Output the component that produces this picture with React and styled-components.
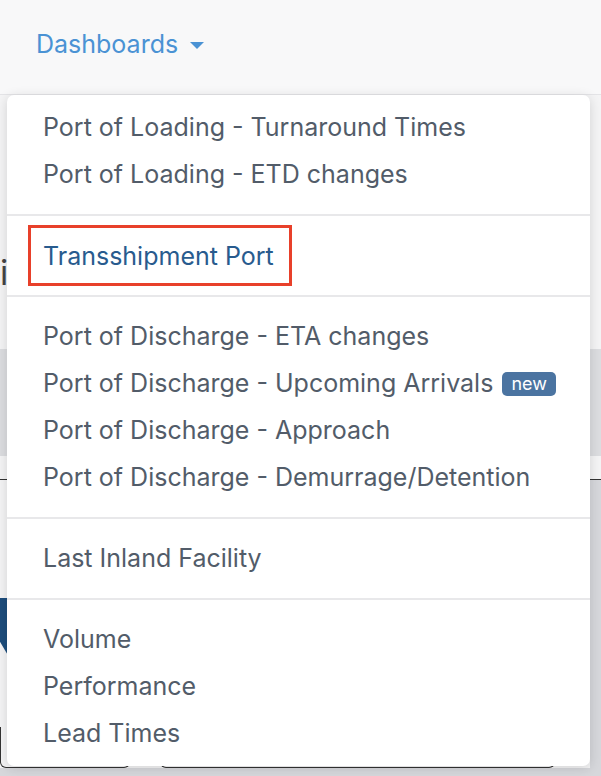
import React from "react";
import styled, { createGlobalStyle } from "styled-components";

const GlobalStyle = createGlobalStyle`
  html, body {
    margin: 0;
    padding: 0;
    background: #dcdde0;
    font-family: Inter, "Noto Sans", sans-serif;
  }
`;

const Page = styled.div`
  width: 601px;
  height: 776px;
  overflow: hidden;
  display: flex;
  flex-direction: column;
  background: #f4f4f5;
`;

const NavBar = styled.div`
  height: 95px;
  flex: none;
  background: #f8f8f9;
  border-bottom: 1px solid #e4e4e7;
  display: flex;
  align-items: center;
  padding-left: 36px;
  box-sizing: border-box;
  padding-bottom: 6px;
`;

const NavItem = styled.div`
  position: relative;
`;

const Toggle = styled.button`
  border: 0;
  background: none;
  padding: 0;
  font: inherit;
  font-size: 25px;
  line-height: 30px;
  color: #4a92d4;
  display: flex;
  align-items: center;
  gap: 12px;
  cursor: pointer;
`;

const Caret = styled.span`
  width: 0;
  height: 0;
  border-left: 7px solid transparent;
  border-right: 7px solid transparent;
  border-top: 7px solid #4a92d4;
  margin-top: 2px;
`;

const Menu = styled.div`
  position: absolute;
  left: -29px;
  top: 66px;
  width: 583px;
  box-sizing: border-box;
  background: #fff;
  border-radius: 7px;
  box-shadow: 0 2px 12px rgba(0, 0, 0, 0.14);
  padding: 9px 0;
  z-index: 10;
`;

const Item = styled.div`
  font-size: 25px;
  line-height: 47px;
  height: 47px;
  padding-left: 36px;
  color: ${(p) => (p.$active ? "#285b8e" : "#525c69")};
  display: flex;
  align-items: center;
  white-space: nowrap;
`;

const Highlight = styled.span`
  position: relative;
  line-height: 30px;

  &::after {
    content: "";
    position: absolute;
    left: -15px;
    right: -18px;
    top: -16px;
    bottom: -15px;
    border: 3px solid #e8402a;
  }
`;

const Divider = styled.div`
  height: 2px;
  background: #e8e8ea;
  margin: 16px 0;
`;

const Badge = styled.span`
  margin-left: 9px;
  height: 24px;
  line-height: 23px;
  padding: 0 9px;
  border-radius: 5px;
  background: #4b74a1;
  color: #fff;
  font-size: 18px;
`;

const Content = styled.div`
  flex: 1;
  display: flex;
  flex-direction: column;
`;

const Heading = styled.h1`
  margin: 0;
  height: 254px;
  display: flex;
  align-items: center;
  padding-top: 100px;
  box-sizing: border-box;
  font-size: 34px;
  font-weight: 400;
  color: #444;
`;

const Band = styled.div`
  height: 107px;
  background: #dcdde0;
`;

const Gap = styled.div`
  height: 23px;
  border-bottom: 1px solid #333;
`;

const Lower = styled.div`
  flex: 1;
  display: grid;
  grid-template-columns: 590px 1fr;
  background: #d6d7db;
`;

const Card = styled.div`
  background: #f4f4f5;
  display: flex;
  flex-direction: column;
  justify-content: space-between;
  padding-top: 118px;
  margin-bottom: 8px;
`;

const Tab = styled.div`
  width: 60px;
  height: 56px;
  background: #1d4d7c;
  clip-path: polygon(0 0, 100% 0, 100% 100%, 12% 100%, 0 78%);
`;

const Fields = styled.div`
  display: flex;
  gap: 30px;
  padding-right: 35px;
`;

const Field = styled.div`
  height: 40px;
  width: ${(p) => p.$w}px;
  border: 1px solid #333;
  border-top: 0;
  border-radius: 0 0 6px 6px;
  background: #f4f4f5;
  flex: ${(p) => (p.$grow ? 1 : "none")};
`;

const groups = [
  ["Port of Loading - Turnaround Times", "Port of Loading - ETD changes"],
  ["Transshipment Port"],
  [
    "Port of Discharge - ETA changes",
    "Port of Discharge - Upcoming Arrivals",
    "Port of Discharge - Approach",
    "Port of Discharge - Demurrage/Detention",
  ],
  ["Last Inland Facility"],
  ["Volume", "Performance", "Lead Times"],
];

export default function App() {
  return (
    <>
      <GlobalStyle />
      <Page>
        <NavBar>
          <NavItem>
            <Toggle>
              Dashboards <Caret />
            </Toggle>
            <Menu>
              {groups.map((g, gi) => (
                <React.Fragment key={gi}>
                  {gi > 0 && <Divider />}
                  {g.map((label) =>
                    label === "Transshipment Port" ? (
                      <Item key={label} $active>
                        <Highlight>{label}</Highlight>
                      </Item>
                    ) : (
                      <Item key={label}>
                        {label}
                        {label.includes("Upcoming") && <Badge>new</Badge>}
                      </Item>
                    )
                  )}
                </React.Fragment>
              ))}
            </Menu>
          </NavItem>
        </NavBar>
        <Content>
          <Heading>i</Heading>
          <Band />
          <Gap />
          <Lower>
            <Card>
              <Tab />
              <Fields>
                <Field $w={128} />
                <Field $grow />
              </Fields>
            </Card>
            <div />
          </Lower>
        </Content>
      </Page>
    </>
  );
}
